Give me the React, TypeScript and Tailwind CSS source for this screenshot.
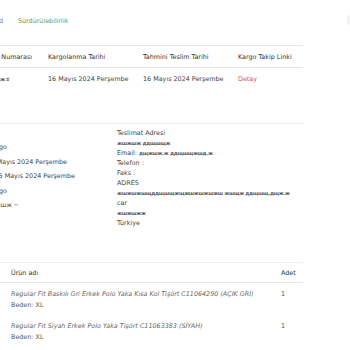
import React from 'react';

const shipments = [
  {
    no: 'Kargo Numarası',
    noValue: 'жшж ʬ',
    shipped: '16 Mayıs 2024 Perşembe',
    eta: '16 Mayıs 2024 Perşembe',
  },
];

// left column of the info block: each row ends at its own x, the start is cut off by the page edge
const leftRows = [
  { text: 'Kargo Firması : Aras Kargo', w: 'w-[54px]' },
  { text: 'Kargolanma Tarihi : 16 Mayıs 2024 Perşembe', w: 'w-[114px]' },
  { text: 'Tahmini Teslim Tarihi : 16 Mayıs 2024 Perşembe', w: 'w-[122px]' },
  { text: 'Teslimat Şekli : Kargo', w: 'w-[54px]' },
  { text: 'Not : жшж ꞏꞏ', w: 'w-[65px]' },
];

const products = [
  { name: 'Regular Fit Baskılı Gri Erkek Polo Yaka Kısa Kol Tişört C11064290 (AÇIK GRİ)', size: 'XL', qty: 1 },
  { name: 'Regular Fit Siyah Erkek Polo Yaka Tişört C11063383 (SİYAH)', size: 'XL', qty: 1 },
];

function Garbled({ children }: { children: React.ReactNode }) {
  return <span className="text-[5px] font-bold tracking-[-0.3px] text-[#555]">{children}</span>;
}

export default function App() {
  return (
    <div className="relative w-[350px] h-[350px] overflow-hidden bg-white text-[#444] font-['DejaVu_Sans',sans-serif] text-[6.4px]">
      {/* faint edge of a control at the right */}
      <div className="absolute right-0 top-[15px] w-[3px] h-[10px] bg-[#f4f4f4]"></div>

      <div className="-ml-[47px] w-[350px]">
        {/* Tabs */}
        <div className="flex gap-[15px] pt-[16px] leading-[10px]">
          <div className="flex justify-end w-[50px] whitespace-nowrap text-[#7a6cc0]">Standard</div>
          <div className="whitespace-nowrap text-[#6b9a4a]">Sürdürülebilirlik</div>
        </div>

        {/* Shipment table */}
        <div className="mt-[19px] border-t border-[#e6e6e6]">
          <div className="grid grid-cols-[95px_95px_95px_65px] h-[22px] items-center leading-[10px] border-b border-[#e6e6e6] text-[#333]">
            <div className="whitespace-nowrap flex justify-end pr-[16px]">Kargo Numarası</div>
            <div className="whitespace-nowrap">Kargolanma Tarihi</div>
            <div className="whitespace-nowrap">Tahmini Teslim Tarihi</div>
            <div className="whitespace-nowrap">Kargo Takip Linki</div>
          </div>
          {shipments.map((s) => (
            <div key={s.no} className="grid grid-cols-[95px_95px_95px_65px] pt-[6px] leading-[10px]">
              <div className="whitespace-nowrap flex justify-end pr-[39px]">
                <Garbled>{s.noValue}</Garbled>
              </div>
              <div className="whitespace-nowrap">{s.shipped}</div>
              <div className="whitespace-nowrap">{s.eta}</div>
              <div className="whitespace-nowrap text-[#d9534f]">Detay</div>
            </div>
          ))}
        </div>

        {/* Order info */}
        <div className="mt-[39px] border-t border-[#efefef] grid grid-cols-[164px_1fr]">
          <div className="pt-[16px] leading-[14.5px]">
            {leftRows.map((r) => (
              <div key={r.text} className={`flex justify-end whitespace-nowrap ${r.w}`}>
                {r.text}
              </div>
            ))}
          </div>
          <div className="pt-[4px] leading-[10px] whitespace-nowrap">
            <div>Teslimat Adresi</div>
            <div><Garbled>жшжшж ддщшщж</Garbled></div>
            <div>Email: <Garbled>дщжшж.ж ддщшщжшд.ж</Garbled></div>
            <div>Telefon :</div>
            <div>Faks :</div>
            <div>ADRES</div>
            <div><Garbled>жшжшжшщддщшщжщжшжшжшжш жшщж ддщшщ.дщж.ж</Garbled></div>
            <div>car</div>
            <div><Garbled>жшжшжж</Garbled></div>
            <div>Türkiye</div>
          </div>
        </div>

        {/* Products */}
        <div className="mt-[34px] border-t border-[#efefef]">
          <div className="grid grid-cols-[328px_1fr] h-[20px] items-center leading-[10px] border-b border-[#e6e6e6] text-[#333]">
            <div className="pl-[58px]">Ürün adı</div>
            <div>Adet</div>
          </div>
          {products.map((p) => (
            <div key={p.name} className="grid grid-cols-[328px_1fr] pt-[6px] pb-[5px] leading-[10.5px]">
              <div className="pl-[58px] whitespace-nowrap">
                <div className="italic text-[#666]">{p.name}</div>
                <div className="text-[#555]">Beden: {p.size}</div>
              </div>
              <div className="text-[#555]">{p.qty}</div>
            </div>
          ))}
        </div>
      </div>
    </div>
  );
}
